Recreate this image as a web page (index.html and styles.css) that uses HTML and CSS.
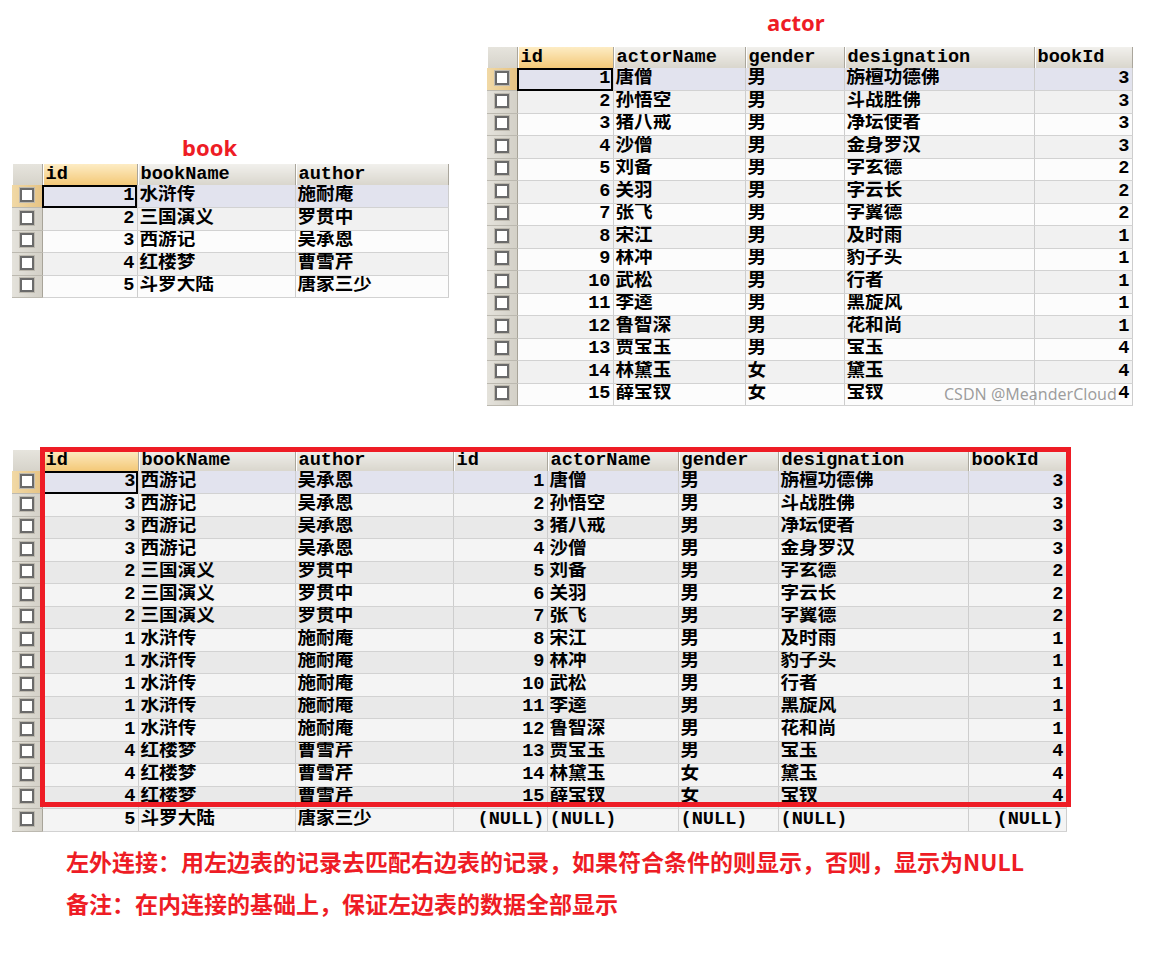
FILE: index.html
```html
<!DOCTYPE html>
<html lang="zh">
<head>
<meta charset="utf-8">
<title>左外连接</title>
<link rel="stylesheet" href="styles.css">
</head>
<body>
<div class="top">
  <div class="block book-block">
    <div class="title">book</div>
    <table class="grid book">
      <colgroup><col style="width:30px"><col style="width:95px"><col style="width:158px"><col style="width:153px"></colgroup>
      <tr class="head"><th class="corner"></th><th class="hid">id</th><th>bookName</th><th>author</th></tr>
      <tr class="sel"><td class="chk csel"><span class="cb"></span></td><td class="num focus">1</td><td>水浒传</td><td>施耐庵</td></tr>
      <tr><td class="chk"><span class="cb"></span></td><td class="num">2</td><td>三国演义</td><td>罗贯中</td></tr>
      <tr><td class="chk"><span class="cb"></span></td><td class="num">3</td><td>西游记</td><td>吴承恩</td></tr>
      <tr><td class="chk"><span class="cb"></span></td><td class="num">4</td><td>红楼梦</td><td>曹雪芹</td></tr>
      <tr><td class="chk"><span class="cb"></span></td><td class="num">5</td><td>斗罗大陆</td><td>唐家三少</td></tr>
    </table>
  </div>
  <div class="block actor-block">
    <div class="title">actor</div>
    <table class="grid actor">
      <colgroup><col style="width:30px"><col style="width:96px"><col style="width:132px"><col style="width:99px"><col style="width:190px"><col style="width:98px"></colgroup>
      <tr class="head"><th class="corner"></th><th class="hid">id</th><th>actorName</th><th>gender</th><th>designation</th><th>bookId</th></tr>
      <tr class="sel"><td class="chk csel"><span class="cb"></span></td><td class="num focus">1</td><td>唐僧</td><td>男</td><td>旃檀功德佛</td><td class="num">3</td></tr>
      <tr><td class="chk"><span class="cb"></span></td><td class="num">2</td><td>孙悟空</td><td>男</td><td>斗战胜佛</td><td class="num">3</td></tr>
      <tr><td class="chk"><span class="cb"></span></td><td class="num">3</td><td>猪八戒</td><td>男</td><td>净坛使者</td><td class="num">3</td></tr>
      <tr><td class="chk"><span class="cb"></span></td><td class="num">4</td><td>沙僧</td><td>男</td><td>金身罗汉</td><td class="num">3</td></tr>
      <tr><td class="chk"><span class="cb"></span></td><td class="num">5</td><td>刘备</td><td>男</td><td>字玄德</td><td class="num">2</td></tr>
      <tr><td class="chk"><span class="cb"></span></td><td class="num">6</td><td>关羽</td><td>男</td><td>字云长</td><td class="num">2</td></tr>
      <tr><td class="chk"><span class="cb"></span></td><td class="num">7</td><td>张飞</td><td>男</td><td>字翼德</td><td class="num">2</td></tr>
      <tr><td class="chk"><span class="cb"></span></td><td class="num">8</td><td>宋江</td><td>男</td><td>及时雨</td><td class="num">1</td></tr>
      <tr><td class="chk"><span class="cb"></span></td><td class="num">9</td><td>林冲</td><td>男</td><td>豹子头</td><td class="num">1</td></tr>
      <tr><td class="chk"><span class="cb"></span></td><td class="num">10</td><td>武松</td><td>男</td><td>行者</td><td class="num">1</td></tr>
      <tr><td class="chk"><span class="cb"></span></td><td class="num">11</td><td>李逵</td><td>男</td><td>黑旋风</td><td class="num">1</td></tr>
      <tr><td class="chk"><span class="cb"></span></td><td class="num">12</td><td>鲁智深</td><td>男</td><td>花和尚</td><td class="num">1</td></tr>
      <tr><td class="chk"><span class="cb"></span></td><td class="num">13</td><td>贾宝玉</td><td>男</td><td>宝玉</td><td class="num">4</td></tr>
      <tr><td class="chk"><span class="cb"></span></td><td class="num">14</td><td>林黛玉</td><td>女</td><td>黛玉</td><td class="num">4</td></tr>
      <tr><td class="chk"><span class="cb"></span></td><td class="num">15</td><td>薛宝钗</td><td>女</td><td>宝钗</td><td class="num">4</td></tr>
    </table>
    <div class="watermark">CSDN @MeanderCloud</div>
  </div>
</div>

<div class="result-block">
  <table class="grid result">
    <colgroup><col style="width:30px"><col style="width:96px"><col style="width:157px"><col style="width:158px"><col style="width:94px"><col style="width:131px"><col style="width:100px"><col style="width:190px"><col style="width:98px"></colgroup>
    <tr class="head"><th class="corner"></th><th class="hid">id</th><th>bookName</th><th>author</th><th>id</th><th>actorName</th><th>gender</th><th>designation</th><th>bookId</th></tr>
    <tr class="sel"><td class="chk csel"><span class="cb"></span></td><td class="num focus">3</td><td>西游记</td><td>吴承恩</td><td class="num">1</td><td>唐僧</td><td>男</td><td>旃檀功德佛</td><td class="num">3</td></tr>
    <tr><td class="chk"><span class="cb"></span></td><td class="num">3</td><td>西游记</td><td>吴承恩</td><td class="num">2</td><td>孙悟空</td><td>男</td><td>斗战胜佛</td><td class="num">3</td></tr>
    <tr><td class="chk"><span class="cb"></span></td><td class="num">3</td><td>西游记</td><td>吴承恩</td><td class="num">3</td><td>猪八戒</td><td>男</td><td>净坛使者</td><td class="num">3</td></tr>
    <tr><td class="chk"><span class="cb"></span></td><td class="num">3</td><td>西游记</td><td>吴承恩</td><td class="num">4</td><td>沙僧</td><td>男</td><td>金身罗汉</td><td class="num">3</td></tr>
    <tr><td class="chk"><span class="cb"></span></td><td class="num">2</td><td>三国演义</td><td>罗贯中</td><td class="num">5</td><td>刘备</td><td>男</td><td>字玄德</td><td class="num">2</td></tr>
    <tr><td class="chk"><span class="cb"></span></td><td class="num">2</td><td>三国演义</td><td>罗贯中</td><td class="num">6</td><td>关羽</td><td>男</td><td>字云长</td><td class="num">2</td></tr>
    <tr><td class="chk"><span class="cb"></span></td><td class="num">2</td><td>三国演义</td><td>罗贯中</td><td class="num">7</td><td>张飞</td><td>男</td><td>字翼德</td><td class="num">2</td></tr>
    <tr><td class="chk"><span class="cb"></span></td><td class="num">1</td><td>水浒传</td><td>施耐庵</td><td class="num">8</td><td>宋江</td><td>男</td><td>及时雨</td><td class="num">1</td></tr>
    <tr><td class="chk"><span class="cb"></span></td><td class="num">1</td><td>水浒传</td><td>施耐庵</td><td class="num">9</td><td>林冲</td><td>男</td><td>豹子头</td><td class="num">1</td></tr>
    <tr><td class="chk"><span class="cb"></span></td><td class="num">1</td><td>水浒传</td><td>施耐庵</td><td class="num">10</td><td>武松</td><td>男</td><td>行者</td><td class="num">1</td></tr>
    <tr><td class="chk"><span class="cb"></span></td><td class="num">1</td><td>水浒传</td><td>施耐庵</td><td class="num">11</td><td>李逵</td><td>男</td><td>黑旋风</td><td class="num">1</td></tr>
    <tr><td class="chk"><span class="cb"></span></td><td class="num">1</td><td>水浒传</td><td>施耐庵</td><td class="num">12</td><td>鲁智深</td><td>男</td><td>花和尚</td><td class="num">1</td></tr>
    <tr><td class="chk"><span class="cb"></span></td><td class="num">4</td><td>红楼梦</td><td>曹雪芹</td><td class="num">13</td><td>贾宝玉</td><td>男</td><td>宝玉</td><td class="num">4</td></tr>
    <tr><td class="chk"><span class="cb"></span></td><td class="num">4</td><td>红楼梦</td><td>曹雪芹</td><td class="num">14</td><td>林黛玉</td><td>女</td><td>黛玉</td><td class="num">4</td></tr>
    <tr><td class="chk"><span class="cb"></span></td><td class="num">4</td><td>红楼梦</td><td>曹雪芹</td><td class="num">15</td><td>薛宝钗</td><td>女</td><td>宝钗</td><td class="num">4</td></tr>
    <tr><td class="chk"><span class="cb"></span></td><td class="num">5</td><td>斗罗大陆</td><td>唐家三少</td><td class="num">(NULL)</td><td>(NULL)</td><td>(NULL)</td><td>(NULL)</td><td class="num">(NULL)</td></tr>
  </table>
  <div class="highlight"></div>
</div>

<div class="notes">
  <p class="note">左外连接：用左边表的记录去匹配右边表的记录，如果符合条件的则显示，否则，显示为NULL</p>
  <p class="note">备注：在内连接的基础上，保证左边表的数据全部显示</p>
</div>
</body>
</html>
```

FILE: styles.css
```css
body {
  margin: 0;
  background: #ffffff;
  width: 1159px;
}

.top {
  display: flex;
  align-items: flex-start;
}

.block {
  position: relative;
}

.book-block {
  margin: 131px 0 0 12px;
  width: 436px;
}

.actor-block {
  margin: 6px 0 0 39px;
  width: 645px;
}

.title {
  font-family: "Noto Sans", "Noto Sans CJK SC", sans-serif;
  font-weight: bold;
  font-size: 22px;
  line-height: 32px;
  height: 32px;
  color: #ee1c25;
}

.book-block .title {
  padding-left: 170px;
  margin-bottom: 1px;
}

.actor-block .title {
  padding-left: 280px;
  margin-bottom: 9px;
}

.grid {
  table-layout: fixed;
  border-collapse: collapse;
  font-family: "Liberation Mono", "Noto Sans CJK SC", monospace;
  font-size: 18.6px;
  font-weight: bold;
  color: #000;
}

.book { width: 436px; }
.actor { width: 645px; }
.result { width: 1054px; }

.grid tr {
  height: 22.5px;
}

.grid tr.head {
  height: 21px;
}

.grid td,
.grid th {
  padding: 0 2px 0 2px;
  white-space: nowrap;
  overflow: hidden;
  line-height: 20px;
  text-align: left;
}

.grid td {
  border-right: 1px solid #cdcdcd;
  border-bottom: 1px solid #d2d2d2;
  background: #fcfcfc;
}

.grid tr:nth-child(odd) td {
  background: #f1f1f1;
}

.result tr:nth-child(even) td {
  background: #e9e9e9;
}

.result tr:nth-child(odd) td {
  background: #f4f4f4;
}

.grid th {
  background: linear-gradient(#f1f0ec, #d9d6cd);
  border-right: 1px solid #aaa69c;
  box-shadow: inset 1px 0 #ffffff;
  font-weight: bold;
  line-height: 18px;
  padding-left: 3px;
}

.grid th.hid {
  background: linear-gradient(#fdecc4, #f3c877);
}

.grid th.corner {
  background: linear-gradient(#e6e4dd, #d6d3ca);
}

.grid td.num {
  text-align: right;
  padding-right: 2px;
}

.grid td.chk,
.grid tr:nth-child(odd) td.chk,
.result tr:nth-child(even) td.chk,
.result tr:nth-child(odd) td.chk {
  background: linear-gradient(90deg, #e4e2db, #d3d0c7);
  border-right: 1px solid #a8a499;
  border-bottom: 1px solid #bcb9b0;
  text-align: center;
  padding: 0;
}

.grid tr.sel td {
  background: #e2e3ee;
}

.grid tr.sel td.chk.csel {
  background: linear-gradient(90deg, #f1d9a6, #e6c384);
}

.grid td.focus {
  outline: 2px solid #000;
  outline-offset: -2px;
}

.cb {
  display: inline-block;
  width: 10px;
  height: 10px;
  border: 2px solid #6a6a6a;
  background: #ffffff;
  vertical-align: middle;
  box-shadow: 0 0 0 1px #bdb9af;
}

.watermark {
  position: absolute;
  left: 457px;
  top: 378px;
  font-family: "Noto Sans", sans-serif;
  font-size: 16px;
  line-height: 20px;
  color: rgba(140, 140, 140, 0.85);
  white-space: nowrap;
}

.result-block {
  position: relative;
  margin: 44px 0 0 12px;
  width: 1054px;
}

.highlight {
  position: absolute;
  left: 28px;
  top: -3px;
  width: 1021px;
  height: 350px;
  border: 5px solid #ee1c25;
  pointer-events: none;
}

.notes {
  margin: 8px 0 0 66px;
}

.note {
  margin: 0;
  font-family: "Noto Sans CJK SC", "Noto Sans", sans-serif;
  font-weight: bold;
  font-size: 23px;
  line-height: 42px;
  color: #ee1c25;
  white-space: nowrap;
}
```
